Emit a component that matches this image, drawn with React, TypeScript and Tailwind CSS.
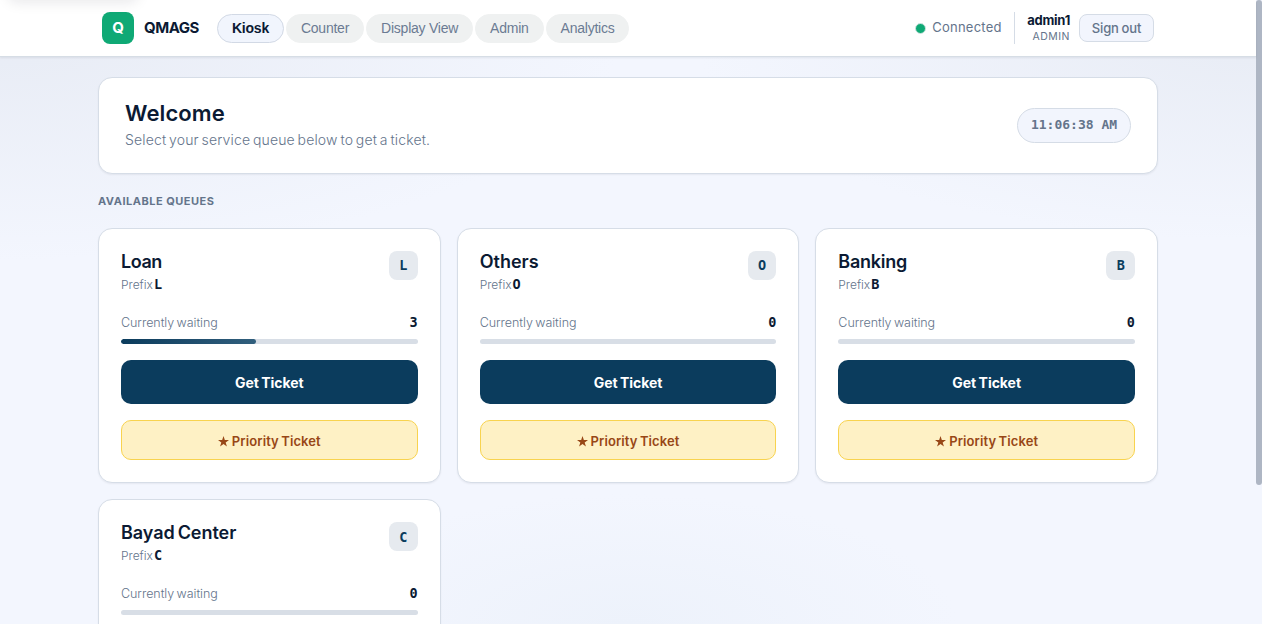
const navItems = ["Kiosk", "Counter", "Display View", "Admin", "Analytics"];

const queues = [
    { name: "Loan", prefix: "L", waiting: 3, percent: 45.5, title: "tracking-[-0.45px]" },
    { name: "Others", prefix: "O", waiting: 0, percent: 0, title: "tracking-[0px]" },
    { name: "Banking", prefix: "B", waiting: 0, percent: 0, title: "tracking-[-0.25px]" },
    { name: "Bayad Center", prefix: "C", waiting: 0, percent: 0, title: "tracking-[-0.05px] [word-spacing:-1.5px]" },
];

type Queue = (typeof queues)[number];

const Header = () => {
    return (
        <header className="relative h-[57px] shrink-0 border-b border-[#d6dde5] bg-white shadow-[0_1px_2px_rgba(15,23,42,0.08)]">
            <div className="absolute top-[-40px] left-[8px] h-[38px] w-[130px] rounded-lg shadow-[0_4px_14px_rgba(15,23,42,0.1)]" />
            <div className="mx-auto flex h-[56px] w-[1052px] items-center justify-between">
                <div className="flex items-center">
                    <div className="flex h-8 w-8 items-center justify-center rounded-[8px] bg-[#0fa975] text-[15px] font-bold text-white">Q</div>
                    <span className="ml-[10px] w-[55px] text-[15px] font-bold tracking-[-0.5px] whitespace-nowrap">QMAGS</span>
                    <nav className="ml-[18px] flex gap-[2px] font-['Liberation_Sans',Arial,sans-serif] text-[14px] tracking-[-0.24px]">
                        {navItems.map((item, i) => (
                            <button
                                key={item}
                                className={
                                    i === 0
                                        ? "h-[29px] rounded-full border border-[#d2d9e5] bg-[#f1f5fd] px-[14px] font-bold text-[#0b1a33]"
                                        : "h-[29px] rounded-full border border-[#eff1f1] bg-[#eff1f1] px-[14px] text-[#6b7b93]"
                                }
                            >
                                {item}
                            </button>
                        ))}
                    </nav>
                </div>
                <div className="flex items-center">
                    <span className="h-[11px] w-[11px] rounded-full border border-[#d3e5e2] bg-[#0fa975]" />
                    <span className="ml-[6px] w-[70px] text-[13px] tracking-[0.25px] whitespace-nowrap text-[#64748b]">Connected</span>
                    <div className="ml-3 flex h-8 flex-col items-end border-l border-[#d5dce6] pl-3">
                        <span className="text-[13px] leading-[17px] font-bold tracking-[-0.25px]">admin1</span>
                        <span className="text-[10.5px] leading-[15px] tracking-[0.5px] text-[#64748b]">ADMIN</span>
                    </div>
                    <button className="ml-[9px] h-[28px] w-[75px] rounded-[8px] border border-[#d5dce6] bg-[#f2f5fd] pt-px text-[13px] font-medium tracking-[-0.1px] text-[#64748b] [word-spacing:-0.7px]">
                        Sign out
                    </button>
                </div>
            </div>
        </header>
    );
};

const QueueCard = ({ queue }: { queue: Queue }) => {
    return (
        <div className="h-[255.4px] rounded-[14px] border border-[#d6dde7] bg-white px-[22px] pt-[22px] shadow-[0_1px_2px_rgba(15,23,42,0.06)]">
            <div className="flex h-[57px] items-start justify-between">
                <div>
                    <h3 className={`text-[18px] leading-[22px] font-semibold whitespace-nowrap ${queue.title}`}>{queue.name}</h3>
                    <p className="mt-[2px] text-[12px] leading-[18px] font-light tracking-[0px] text-[#64748b]">
                        Prefix
                        <span className="ml-px font-['DejaVu_Sans_Mono',monospace] text-[13.5px] font-bold text-[#0b1a33]">{queue.prefix}</span>
                    </p>
                </div>
                <span className="flex h-[29px] w-[28.5px] items-center justify-center rounded-[8px] bg-[#e6eaef] font-['DejaVu_Sans_Mono',monospace] text-[13.5px] font-bold text-[#0b3c5d]">
                    {queue.prefix}
                </span>
            </div>
            <div className="mb-px flex h-[30px] items-center justify-between">
                <span className="text-[12.5px] font-light tracking-[-0.05px] whitespace-nowrap text-[#64748b] [word-spacing:-1px]">Currently waiting</span>
                <span className="pb-[2px] font-['DejaVu_Sans_Mono',monospace] text-[13.5px] font-bold">{queue.waiting}</span>
            </div>
            <div className="h-[5px] overflow-hidden rounded-full bg-[#d8dee6]">
                <div className="h-full rounded-full bg-linear-to-r from-[#0b3c5d] to-[#315f7d]" style={{ width: `${queue.percent}%` }} />
            </div>
            <button className="mt-4 block h-[44px] w-full rounded-[10px] bg-[#0b3c5d] text-[14px] font-bold tracking-[-0.05px] text-white [word-spacing:-0.8px]">Get Ticket</button>
            <button className="mt-4 block h-[40px] w-full rounded-[10px] border border-[#f8d34f] bg-[#fef1c5] pt-[3px] text-[13px] font-semibold tracking-[0.1px] text-[#984716]">
                <span className="flex items-center justify-center gap-[3px] [word-spacing:-1px]">
                    <svg className="-mt-px" width="11" height="11" viewBox="0 0 24 24" fill="currentColor">
                        <path d="M12 0l2.9 8.6H24l-7.3 5.4 2.8 9L12 17.5 4.5 23l2.8-9L0 8.6h9.1z" />
                    </svg>
                    Priority Ticket
                </span>
            </button>
        </div>
    );
};

const App = () => {
    return (
        <div className="flex h-[624px] w-full overflow-hidden bg-[#f3f6fe] font-['Inter',sans-serif] text-[#0b1a33]">
            <div className="flex h-full w-[1256px] shrink-0 flex-col bg-[radial-gradient(ellipse_620px_220px_at_0%_40px,#e8ecf5,transparent),radial-gradient(ellipse_560px_200px_at_100%_40px,#e8ecf5,transparent),radial-gradient(ellipse_330px_130px_at_50%_100%,#edf2fb,transparent)]">
                <Header />
                <main className="mx-auto mt-5 w-[1060px]">
                    <section className="flex h-[97px] items-center justify-between rounded-[14px] border border-[#d6dde7] bg-white px-[26px] pb-[2px] shadow-[0_1px_2px_rgba(15,23,42,0.06)]">
                        <div>
                            <h1 className="text-[22px] leading-[28px] font-semibold tracking-[0.1px]">Welcome</h1>
                            <p className="mt-[2px] text-[14px] leading-[22px] font-light tracking-[0.15px] whitespace-nowrap text-[#64748b] [word-spacing:-1.3px]">
                                Select your service queue below to get a ticket.
                            </p>
                        </div>
                        <div className="mt-[2px] flex h-[35px] w-[114px] items-center justify-center rounded-full border border-[#d5dce6] bg-[#f2f5fd] pb-px font-['DejaVu_Sans_Mono',monospace] text-[13px] font-bold whitespace-pre text-[#64748b]">
                            11:06:38 AM
                        </div>
                    </section>
                    <h2 className="mt-[19px] mb-[19px] text-[11px] leading-4 font-bold tracking-[0.5px] text-[#64748b]">AVAILABLE QUEUES</h2>
                    <div className="grid grid-cols-3 gap-4">
                        {queues.map((queue) => (
                            <QueueCard key={queue.name} queue={queue} />
                        ))}
                    </div>
                </main>
            </div>
            <div className="h-[485px] w-[6px] rounded-full bg-[#aeb6c4]" />
        </div>
    );
};

export default App;
